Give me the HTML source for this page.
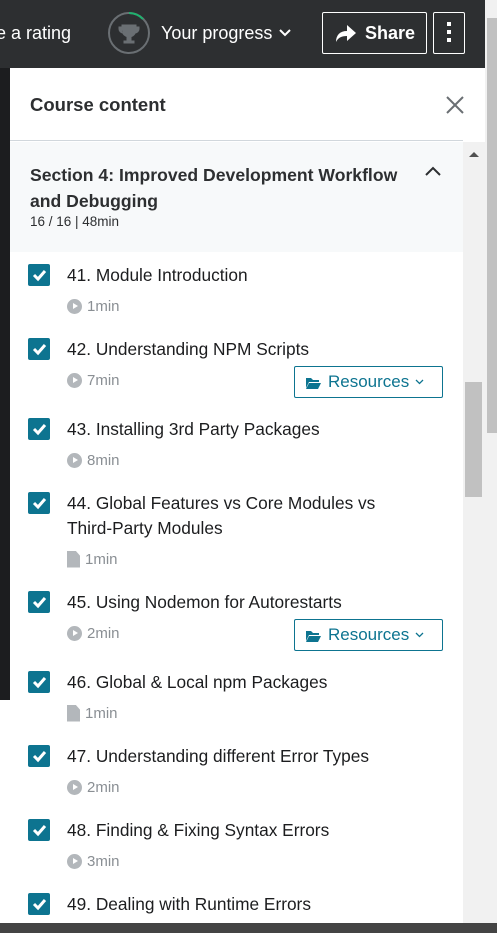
<!DOCTYPE html>
<html><head><style>
*{box-sizing:border-box;margin:0;padding:0}
body{width:497px;height:933px;overflow:hidden;background:#fff;font-family:"Liberation Sans",sans-serif;position:relative}
.top{position:absolute;left:0;top:0;width:485px;height:68px;background:#2d2f31}
.top .t{position:absolute;color:#fff;font-size:18px;top:23px}
.left{position:absolute;left:0;top:68px;width:10px;height:632px;background:#1c1d1f}
.panel{position:absolute;left:10px;top:68px;width:453px;height:855px;background:#fff}
.hdr{height:73px;border-bottom:1px solid #d1d7dc;position:relative}
.hdr b{position:absolute;left:20px;top:26px;font-size:18.5px;color:#2d2f31}
.sec{position:absolute;left:10px;top:142px;width:453px;height:110px;background:#f7f9fa}
.sec b{position:absolute;left:20px;top:20px;font-size:17.6px;line-height:26px;color:#2d2f31;width:390px}
.sec span{position:absolute;left:20px;top:72px;font-size:13.5px;color:#2d2f31}
.item{position:absolute;left:28px}
.cb{position:absolute;left:0;top:0;width:22px;height:22px;background:#0d7490;border-radius:2px}
.title{position:absolute;left:39px;top:-1px;font-size:17.3px;line-height:25px;color:#1c1d1f;width:330px}
.dur{position:absolute;left:39px;font-size:15px;color:#8a8f94;display:flex;align-items:center;gap:5px;height:18px}
.play{width:15px;height:15px;border-radius:50%;background:#b3b7bb;position:relative}
.play:after{content:"";position:absolute;left:6px;top:4px;border-left:5px solid #fff;border-top:3.5px solid transparent;border-bottom:3.5px solid transparent}
.doc{width:13px;height:17px;background:#b3b7bb;clip-path:polygon(0 0,65% 0,100% 30%,100% 100%,0 100%)}
.res{position:absolute;left:266px;width:149px;height:32px;border:1px solid #0d7490;border-radius:2px;color:#0d7490;font-size:17px;display:flex;align-items:center;padding-left:10px;gap:6px}
.isb{position:absolute;left:463px;top:142px;width:22px;height:781px;background:#f1f1f1}
.osb{position:absolute;left:485px;top:0;width:12px;height:923px;background:#f1f1f1}
.task{position:absolute;left:0;top:923px;width:497px;height:10px;background:#444}
</style></head><body>
<div class="top">
<div class="t" style="left:-4px">e a rating</div>
<svg style="position:absolute;left:107px;top:11px" width="44" height="44"><circle cx="22" cy="22" r="20" fill="none" stroke="#6a6f73" stroke-width="2"/><path d="M22 2 A20 20 0 0 1 36 8" fill="none" stroke="#1eb26e" stroke-width="2"/><path d="M15 14h14v5a7 7 0 0 1-14 0z M20 26h4v4h3v2h-10v-2h3z M15 16h-3v2a4 4 0 0 0 4 4 M29 16h3v2a4 4 0 0 1-4 4" fill="#6a6f73" stroke="#6a6f73"/></svg>
<div class="t" style="left:161px">Your progress</div>
<svg style="position:absolute;left:279px;top:29px" width="12" height="8"><path d="M1 1l5 5 5-5" fill="none" stroke="#fff" stroke-width="2"/></svg>
<div style="position:absolute;left:322px;top:12px;width:105px;height:42px;border:1px solid #fff;border-radius:2px"></div>
<svg style="position:absolute;left:335px;top:24px" width="22" height="20"><path d="M12 1l9 8-9 8v-5c-6 0-9 2-11 6 0-7 4-11 11-11z" fill="#fff"/></svg>
<div class="t" style="left:365px;font-weight:bold">Share</div>
<div style="position:absolute;left:433px;top:12px;width:32px;height:42px;border:1px solid #fff;border-radius:2px"></div>
<div style="position:absolute;left:447px;top:22px;width:4px;height:20px;background:linear-gradient(#fff 4px,transparent 4px,transparent 8px,#fff 8px,#fff 12px,transparent 12px,transparent 16px,#fff 16px)"></div>
</div>
<div class="left"></div>
<div class="panel"><div class="hdr"><b>Course content</b>
<svg style="position:absolute;left:436px;top:28px" width="18" height="18"><path d="M1 1l16 16M17 1L1 17" stroke="#6a6f73" stroke-width="2"/></svg></div></div>
<div class="sec"><b>Section 4: Improved Development Workflow and Debugging</b><span>16 / 16 | 48min</span>
<svg style="position:absolute;left:415px;top:24px" width="16" height="10"><path d="M1 9l7-7 7 7" fill="none" stroke="#2d2f31" stroke-width="2"/></svg></div>

<div id="items"></div>
<div class="isb"><div style="position:absolute;left:6px;top:10px;border-left:5px solid transparent;border-right:5px solid transparent;border-bottom:5px solid #505050"></div><div style="position:absolute;left:2px;top:240px;width:17px;height:115px;background:#c1c1c1"></div></div>
<div class="osb"><div style="position:absolute;left:2px;top:18px;width:10px;height:415px;background:#c1c1c1"></div></div>
<div class="task"></div>
<script>
var d=[[264,"41. Module Introduction","p","1min",0,0],[338,"42. Understanding NPM Scripts","p","7min",1,0],[418,"43. Installing 3rd Party Packages","p","8min",0,0],[492,"44. Global Features vs Core Modules vs Third-Party Modules","d","1min",0,1],[591,"45. Using Nodemon for Autorestarts","p","2min",1,0],[671,"46. Global &amp; Local npm Packages","d","1min",0,0],[745,"47. Understanding different Error Types","p","2min",0,0],[819,"48. Finding &amp; Fixing Syntax Errors","p","3min",0,0],[893,"49. Dealing with Runtime Errors","p","",0,0]];
var h="";d.forEach(function(r){var dy=r[5]?67:42;h+='<div class="item" style="top:'+r[0]+'px"><div class="cb"><svg width="22" height="22"><path d="M6 11l4 4 7-8" fill="none" stroke="#fff" stroke-width="3"/></svg></div><div class="title">'+r[1]+'</div>';if(r[3])h+='<div class="dur" style="top:'+(dy-9)+'px"><div class="'+(r[2]=="p"?"play":"doc")+'"></div>'+r[3]+'</div>';if(r[4])h+='<div class="res" style="top:28px"><svg width="17" height="13"><path d="M1 2h5l2 2h6v2H4L1 12z M4 7h12l-3 6H1z" fill="#0d7490"/></svg>Resources <svg width="9" height="6"><path d="M1 1l3.5 3.5L8 1" fill="none" stroke="#0d7490" stroke-width="1.3"/></svg></div>';h+='</div>'});document.getElementById("items").innerHTML=h;
</script>
</body></html>
